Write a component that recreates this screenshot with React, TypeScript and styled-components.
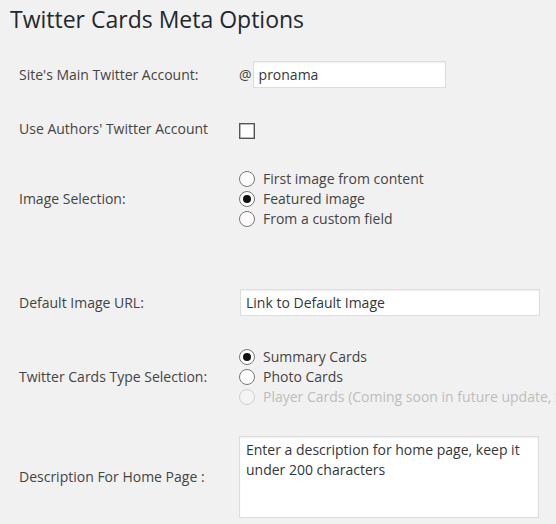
import React from "react";
import styled, { createGlobalStyle } from "styled-components";

const Global = createGlobalStyle`
  html, body {
    margin: 0;
    padding: 0;
    background: #f1f1f1;
    overflow: hidden;
  }
  body {
    font-family: "Open Sans", "DejaVu Sans", sans-serif;
    font-size: 14px;
    line-height: 20px;
    color: #444;
  }
`;

const Wrap = styled.div`
  padding-left: 10px;
  width: 546px;
`;

const Title = styled.h2`
  margin: 0;
  padding: 5px 0 12px;
  font-size: 23px;
  line-height: 29px;
  font-weight: 400;
  color: #23282d;
`;

const Form = styled.div`
  display: flex;
  flex-direction: column;
`;

const Row = styled.div<{ $pt?: number; $pb?: number }>`
  display: grid;
  grid-template-columns: 229px 1fr;
  align-items: center;
  padding: ${(p) => p.$pt ?? 15}px 0 ${(p) => p.$pb ?? 15}px;
`;

const Label = styled.div`
  padding-left: 9px;
  color: #444;
  white-space: nowrap;
`;

const Field = styled.div`
  display: flex;
  flex-direction: column;
  min-width: 0;
  white-space: nowrap;
`;

const Inline = styled.div`
  display: flex;
  align-items: center;
  gap: 1px;
`;

const At = styled.span`
  color: #444;
`;

const TextInput = styled.input<{ $w: number; $ml?: number }>`
  box-sizing: border-box;
  width: ${(p) => p.$w}px;
  height: 27px;
  margin: 0 0 0 ${(p) => p.$ml ?? 0}px;
  padding: 0 5px;
  border: 1px solid #ddd;
  box-shadow: inset 0 1px 2px rgba(0, 0, 0, 0.07);
  background: #fff;
  font-family: "Open Sans", sans-serif;
  font-size: 14px;
  color: #32373c;
  outline: none;
`;

const Check = styled.span`
  display: block;
  box-sizing: border-box;
  width: 16px;
  height: 16px;
  margin-top: 4px;
  border: 1px solid #555;
  box-shadow: inset 0 0 0 0.5px #777;
  background: #fff;
`;

const RadioLine = styled.label<{ $disabled?: boolean }>`
  display: flex;
  align-items: center;
  height: 20px;
  color: ${(p) => (p.$disabled ? "#bdbdbd" : "#444")};
`;

const Radio = styled.span<{ $checked?: boolean; $disabled?: boolean }>`
  position: relative;
  box-sizing: border-box;
  flex: none;
  width: 16px;
  height: 16px;
  margin-right: 8px;
  border-radius: 50%;
  border: 1px solid ${(p) => (p.$disabled ? "#cfcfcf" : "#777")};
  background: ${(p) => (p.$disabled ? "#f4f4f4" : "#fff")};
  &::after {
    content: "";
    display: ${(p) => (p.$checked ? "block" : "none")};
    position: absolute;
    left: 3px;
    top: 3px;
    width: 8px;
    height: 8px;
    border-radius: 50%;
    background: #111;
  }
`;

const TextArea = styled.textarea`
  box-sizing: border-box;
  width: 300px;
  height: 82px;
  margin: 0;
  padding: 3px 6px;
  border: 1px solid #ddd;
  box-shadow: inset 0 1px 2px rgba(0, 0, 0, 0.07);
  background: #fff;
  font-family: "Open Sans", sans-serif;
  font-size: 14px;
  line-height: 20px;
  color: #32373c;
  resize: none;
  outline: none;
  display: block;
`;

const Spacer = styled.div`
  height: 30px;
`;

type Opt = { label: string; checked?: boolean; disabled?: boolean };

const RadioGroup = ({ options }: { options: Opt[] }) => (
  <Field>
    {options.map((o) => (
      <RadioLine key={o.label} $disabled={o.disabled}>
        <Radio $checked={o.checked} $disabled={o.disabled} />
        {o.label}
      </RadioLine>
    ))}
  </Field>
);

export default function App() {
  return (
    <Wrap>
      <Global />
      <Title>Twitter Cards Meta Options</Title>
      <Form>
        <Row>
          <Label>Site's Main Twitter Account:</Label>
          <Field>
            <Inline>
              <At>@</At>
              <TextInput $w={193} defaultValue="pronama" />
            </Inline>
          </Field>
        </Row>
        <Row $pt={16}>
          <Label>Use Authors' Twitter Account</Label>
          <Field>
            <Check />
          </Field>
        </Row>
        <Row>
          <Label>Image Selection:</Label>
          <RadioGroup
            options={[
              { label: "First image from content" },
              { label: "Featured image", checked: true },
              { label: "From a custom field" },
            ]}
          />
        </Row>
        <Spacer />
        <Row>
          <Label>Default Image URL:</Label>
          <Field>
            <TextInput $w={300} $ml={1} defaultValue="Link to Default Image" />
          </Field>
        </Row>
        <Row $pt={16} $pb={14}>
          <Label>Twitter Cards Type Selection:</Label>
          <RadioGroup
            options={[
              { label: "Summary Cards", checked: true },
              { label: "Photo Cards" },
              {
                label: "Player Cards (Coming soon in future update, Stay tuned!)",
                disabled: true,
              },
            ]}
          />
        </Row>
        <Row>
          <Label>Description For Home Page :</Label>
          <Field>
            <TextArea defaultValue="Enter a description for home page, keep it under 200 characters" />
          </Field>
        </Row>
      </Form>
    </Wrap>
  );
}
